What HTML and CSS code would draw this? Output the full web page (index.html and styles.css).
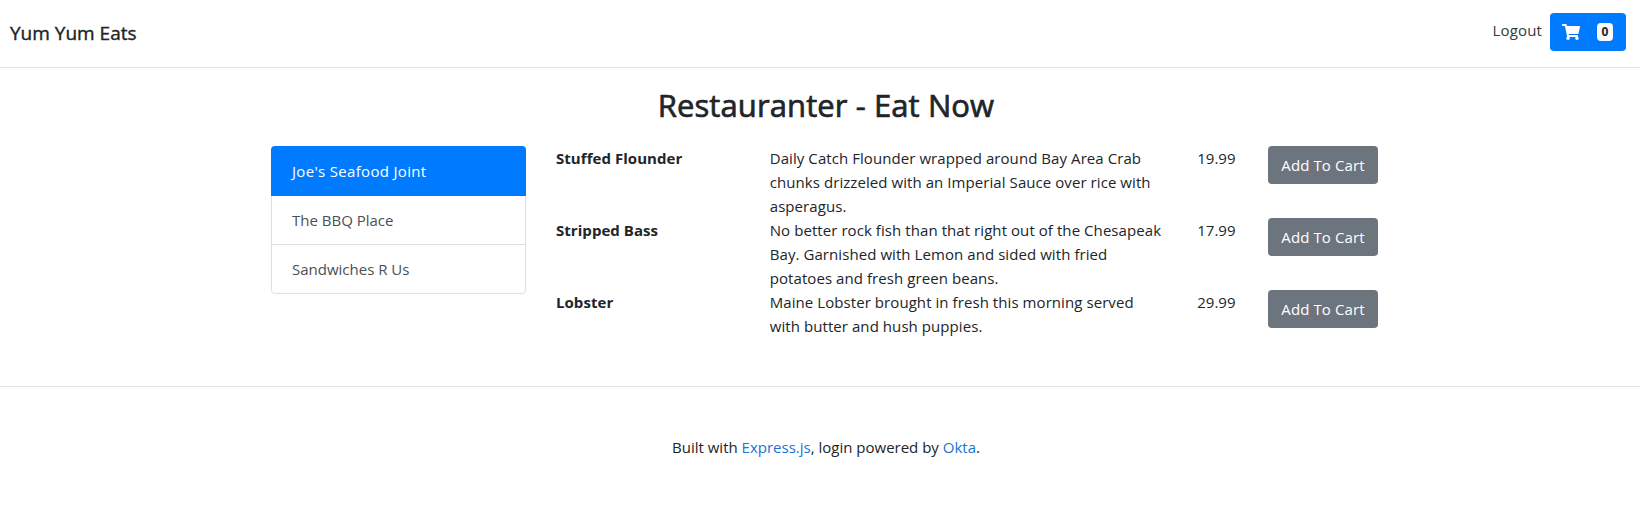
FILE: index.html
```html
<!DOCTYPE html>
<html lang="en">
<head>
<meta charset="utf-8">
<title>Yum Yum Eats</title>
<link rel="stylesheet" href="styles.css">
</head>
<body>
<header class="navbar">
  <h5 class="brand">Yum Yum Eats</h5>
  <a class="logout">Logout</a>
  <button class="btn btn-primary">
    <svg class="cart" viewBox="0 0 576 512" width="18" height="16"><path fill="currentColor" d="M528.12 301.319l47.273-208C578.806 78.301 567.391 64 551.99 64H159.208l-9.166-44.81C147.758 8.021 137.93 0 126.529 0H24C10.745 0 0 10.745 0 24v16c0 13.255 10.745 24 24 24h69.883l70.248 343.435C147.325 417.1 136 435.222 136 456c0 30.928 25.072 56 56 56s56-25.072 56-56c0-15.674-6.447-29.835-16.824-40h209.647C430.447 426.165 424 440.326 424 456c0 30.928 25.072 56 56 56s56-25.072 56-56c0-22.172-12.888-41.332-31.579-50.405l5.517-24.276c3.413-15.018-8.002-29.319-23.403-29.319H218.117l-6.545-32h293.145c11.206 0 20.92-7.754 23.403-18.681z"/></svg>
    <span class="badge">0</span>
  </button>
</header>
<main class="container">
  <h2 class="title">Restauranter - Eat Now</h2>
  <div class="row">
    <nav class="list">
      <a class="item active">Joe's Seafood Joint</a>
      <a class="item">The BBQ Place</a>
      <a class="item">Sandwiches R Us</a>
    </nav>
    <section class="menu">
      <div class="dish">
        <strong class="name">Stuffed Flounder</strong>
        <p class="desc">Daily Catch Flounder wrapped around Bay Area Crab<br>chunks drizzeled with an Imperial Sauce over rice with<br>asperagus.</p>
        <span class="price">19.99</span>
        <button class="btn btn-secondary">Add To Cart</button>
      </div>
      <div class="dish">
        <strong class="name">Stripped Bass</strong>
        <p class="desc">No better rock fish than that right out of the Chesapeak<br>Bay. Garnished with Lemon and sided with fried<br>potatoes and fresh green beans.</p>
        <span class="price">17.99</span>
        <button class="btn btn-secondary">Add To Cart</button>
      </div>
      <div class="dish">
        <strong class="name">Lobster</strong>
        <p class="desc">Maine Lobster brought in fresh this morning served<br>with butter and hush puppies.</p>
        <span class="price">29.99</span>
        <button class="btn btn-secondary">Add To Cart</button>
      </div>
    </section>
  </div>
</main>
<footer class="footer">
  <p>Built with <a>Express.js</a>, login powered by <a>Okta</a>.</p>
</footer>
</body>
</html>
```
FILE: styles.css
```css
* { box-sizing: border-box; }
html { overflow: hidden; }
body {
  margin: 0;
  background: #fff;
  color: #212529;
  font: 400 15px/24px "Open Sans", "Noto Sans", sans-serif;
}
h2, h5, p { margin: 0; }
.navbar {
  display: flex;
  align-items: center;
  height: 68px;
  padding: 0 14px 4px 10px;
  border-bottom: 1px solid #dee2e6;
}
.brand {
  margin-right: auto;
  padding-top: 3px;
  font-size: 19px;
  font-weight: 400;
  -webkit-text-stroke: 0.4px currentColor;
}
.logout {
  margin-right: 8px;
  padding-bottom: 3px;
  color: #343a40;
  letter-spacing: 0.15px;
}
.btn {
  height: 38px;
  border: 0;
  border-radius: 4px;
  color: #fff;
  font: inherit;
  white-space: nowrap;
}
.btn-primary {
  display: flex;
  align-items: center;
  justify-content: space-between;
  width: 76px;
  padding: 0 13px 0 12px;
  background: #007bff;
}
.badge {
  width: 16px;
  height: 18px;
  border-radius: 4px;
  background: #f8f9fa;
  color: #212529;
  font-size: 12px;
  font-weight: 700;
  line-height: 18px;
  text-align: center;
}
.container {
  width: 1140px;
  margin-left: calc(50% - 564px);
  padding: 18px 15px 0;
}
.title {
  margin-bottom: 22px;
  font-size: 31px;
  font-weight: 400;
  line-height: 38px;
  letter-spacing: 0.1px;
  text-align: center;
  -webkit-text-stroke: 0.7px currentColor;
}
.row { display: flex; gap: 30px; align-items: flex-start; }
.list {
  width: 255px;
  border: 1px solid #dfdfdf;
  border-radius: 4px;
}
.item {
  display: block;
  height: 49px;
  padding: 12px 20px;
  border-bottom: 1px solid #dfdfdf;
  color: #495057;
}
.item:last-child { height: 48px; border-bottom: 0; }
.active {
  height: 50px;
  margin: -1px -1px 0;
  padding: 13px 21px;
  border: 0;
  border-radius: 4px 4px 0 0;
  background: #007bff;
  color: #fff;
  letter-spacing: 0.32px;
}
.menu { width: 825px; }
.dish {
  display: grid;
  grid-template-columns: 213.75px 427.5px 70.75px 110px;
  align-items: start;
  min-height: 72px;
}
.desc { white-space: nowrap; letter-spacing: 0.07px; }
.name { letter-spacing: 0.05px; }
.btn-secondary { background: #6c757d; padding: 0; letter-spacing: 0.1px; }
.footer {
  margin-top: 24px;
  padding: 48px 0 0 12px;
  border-top: 1px solid #dee2e6;
  text-align: center;
}
.footer a { color: #2073d4; }
```
